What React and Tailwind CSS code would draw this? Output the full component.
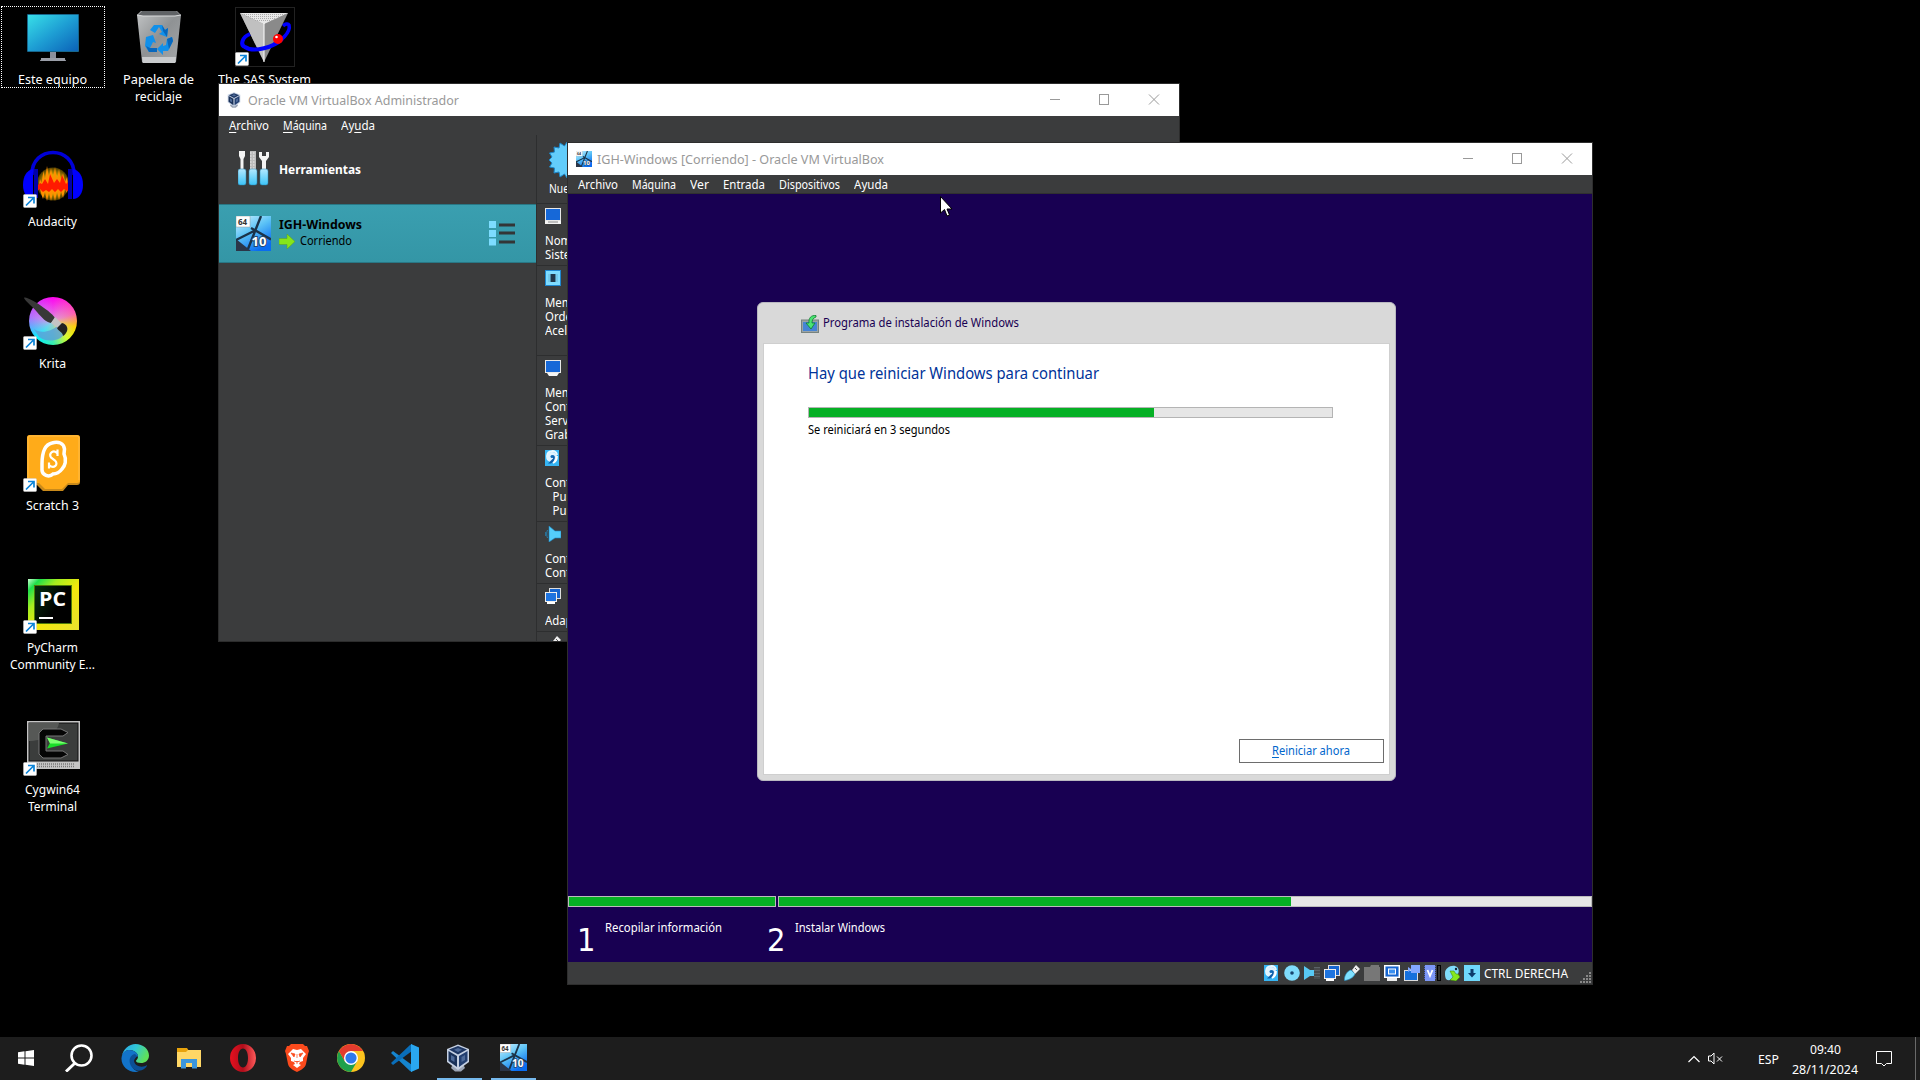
import React, { useLayoutEffect, useRef } from "react";

/* One line of text, condensed or widened to a given advance width. */
function T({ w, className = "", children }) {
  const ref = useRef(null);
  useLayoutEffect(() => {
    const el = ref.current;
    el.style.transform = "none";
    const natural = el.getBoundingClientRect().width;
    el.style.transform = `scaleX(${w / natural})`;
  }, [w]);
  return (
    <span className={`inline-block shrink-0 whitespace-nowrap ${className}`} style={{ width: w }}>
      <span ref={ref} className="inline-block origin-left whitespace-nowrap">{children}</span>
    </span>
  );
}

const U = ({ children }) => <span className="underline underline-offset-2">{children}</span>;

/* ---------- desktop icons (60x60 boxes) ---------- */
const MonitorArt = () => (
  <svg viewBox="0 0 60 60" className="size-[60px]">
    <defs><linearGradient id="mon" x1="0" y1="0" x2="1" y2="1"><stop offset="0" stopColor="#38dfe8" /><stop offset=".5" stopColor="#1e9fd4" /><stop offset="1" stopColor="#0b62b8" /></linearGradient></defs>
    <rect x="4" y="7" width="52" height="38" rx="1" fill="#17668c" />
    <rect x="5" y="8" width="50" height="36" fill="url(#mon)" />
    <path d="M27 45h6v6h-6z" fill="#8b8f9b" /><path d="M18 51h24v1.500l1 1v.500H17v-.500l1-1z" fill="#9a9ea8" />
  </svg>
);
const TrashArt = () => (
  <svg viewBox="0 0 60 60" className="size-[60px]">
    <defs><linearGradient id="bin" x1="0" y1="0" x2="1" y2="1"><stop offset="0" stopColor="#c3c5c6" /><stop offset=".5" stopColor="#8f9294" /><stop offset="1" stopColor="#a5a8aa" /></linearGradient></defs>
    <path d="M8 8l4-4h36l4 4-5 47H13z" fill="url(#bin)" />
    <path d="M9 8l4-4h34l4 4-5 1H14z" fill="#606366" /><path d="M8 8l6 1h32l6-1" fill="none" stroke="#d9dbdc" />
    <path d="M13 50h34l-.6 6H13.600z" fill="#c9cbcd" />
    <g fill="#1190ea">
      <path d="M25 18h8l3 5 3-2-1 9-8-3 3-2-3-5-4 6-5-3z" />
      <path d="M17 30l7-2 3 8-3-1-3 6h7v4h-8l-4-6z" /><path d="M38 32l5-2 1 4-5 10h-5v4l-6-6 6-6v3l3-1z" />
    </g>
    <path d="M33 18l3 5 3-2-1 9-4-6zM17 39l4 2h7v4h-8zM38 32l5-2 1 4-4 8z" fill="#0767bd" />
  </svg>
);
const SasArt = () => (
  <svg viewBox="0 0 60 60" className="size-[60px]">
    <rect x=".5" y=".5" width="59" height="59" fill="#000" stroke="#222" />
    <path d="M36 38C46 35 56 25 54 18c-1-2-4-1-6 1" fill="none" stroke="#00f" strokeWidth="3.500" />
    <path d="M5 6h48L29 55z" fill="#8a8a8a" /><path d="M5 6l24 11v38z" fill="#c0c0c0" />
    <path d="M5 6h48L29 17z" fill="#e8e8e8" /><path d="M7 7.500h44M11 9.500h36M15 11.500h28M20 13.500h18" stroke="#aaa" strokeDasharray="1 1" /><path d="M29 16v39" stroke="#fff" />
    <path d="M15 27C7 30 5 38 10 40c9 6 29 0 37-8" fill="none" stroke="#00f" strokeWidth="4" />
    <circle cx="43" cy="32" r="5" fill="#f00" /><circle cx="41.500" cy="30" r="1.300" fill="#fff" />
  </svg>
);
const AudacityArt = () => (
  <svg viewBox="0 0 60 60" className="size-[60px]">
    <defs><radialGradient id="aud"><stop offset="0" stopColor="#ff8a00" /><stop offset=".55" stopColor="#e0a800" /><stop offset="1" stopColor="#4a3a00" /></radialGradient></defs>
    <ellipse cx="30" cy="35" rx="16" ry="16.500" fill="url(#aud)" />
    <path d="M16 36l1-6 1.500 4 2-12 1.500 9 2-14 2 12 2-10 2 11 2-12 2 13 2-11 2 12 2-8 2 9 2-5 1 8-1 8-2-4-2 9-2-7-2 9-2-9-2 10-2-9-2 9-2-9-2 9-2-9-2 7-2-6z" fill="#ff9100" />
    <path d="M14 37l3-3 2 1 3-5 3 5 2-10 4 9 3-4 3 4 2-8 4 9 2-2 2 3v5l-3 1-3-2-3 3-3-3-3 3-3-3-3 3-3-2-3 2-3-3-3 2z" fill="#ff1a00" />
    <path d="M9 26C8-4 52-4 51 26" fill="none" stroke="#0000d8" strokeWidth="3.500" />
    <path d="M10 20c-6 1-10 7-10 16 0 8 4 14 10 14z" fill="#00f" /><path d="M50 20c6 1 10 7 10 16 0 8-4 14-10 14z" fill="#00f" />
    <path d="M11 20h4v29h-4zM45 20h4v30h-4z" fill="#0000a8" />
  </svg>
);
const KritaArt = () => (
  <span className="relative block size-[60px]">
    <span className="absolute left-[6px] top-[6px] size-[48px] rounded-full bg-[conic-gradient(from_0deg,#ff00f0,#ff5cb0_70deg,#ffd000_105deg,#d8ff20_140deg,#30f0b0_180deg,#00f0ff_225deg,#b070ff_280deg,#ff00f0)]" />
    <span className="absolute left-[6px] top-[6px] size-[48px] rounded-full bg-[radial-gradient(circle,rgba(210,190,220,.75),transparent_70%)]" />
    <svg viewBox="0 0 60 60" className="absolute inset-0 top-[2px] size-[60px]">
      <path d="M11 36c6 5 18 3 24-4l6 9c-3 7-17 9-25 3z" fill="#5b9fd8" opacity=".8" />
      <path d="M1 5c1-2 12 4 20 10 6 4 9 7 11 10l-4 5c-5-1-9-5-14-11C9 13 3 9 1 5z" fill="#383838" />
      <path d="M32 24l7 7-4 4-7-5z" fill="#c4c4c4" /><path d="M39 30c5 1 7 6 4 10-1 2-3 3-3 3 0-4-5-5-6-8z" fill="#222" />
    </svg>
  </span>
);
const ScratchArt = () => (
  <svg viewBox="0 0 60 60" className="size-[60px]">
    <path d="M4 5a3 3 0 013-3h47a3 3 0 013 3v44a3 3 0 01-3 3h-9l-5 6H20l-6-6H7a3 3 0 01-3-3z" fill="#c98a1b" />
    <path d="M4 5a3 3 0 013-3h47a3 3 0 013 3v42a3 3 0 01-3 3H45l-6 6H22l-6-6H7a3 3 0 01-3-3z" fill="#ffab19" />
    <path d="M5 47V5a2 2 0 012-2h47a2 2 0 012 2v42" fill="none" stroke="#ffbd4a" />
    <path d="M29 10c6-2 12 0 12.500 6l-.500 5c3 6 1 12-2 15-3 4-5 5-9 5-4 4-11 1-11-4v-6c0-7 1-19 10-21z" fill="none" stroke="#fff" strokeWidth="3.500" />
    <path d="M34.500 23v-6.500m0 4c-4-5-9 0-6.500 4l4 3c4 4-1 9-6 4.500m0 3.500v-6" fill="none" stroke="#fff" strokeWidth="2.200" />
  </svg>
);
const PycharmArt = () => (
  <span className="flex size-[60px] justify-center">
    <span className="mt-[4px] flex size-[51px] items-center justify-center bg-[linear-gradient(135deg,#c8ffd0,#1ee04a_12%,#a5ee20_30%,#f2e80c_55%,#e8e030)]">
      <span className="flex h-[39px] w-[38px] flex-col border border-[#4c7a08] bg-[linear-gradient(120deg,#06300e,#000_60%)] pl-[4px] pt-[3px]">
        <T w={27} className="h-[20px] font-['Open_Sans',sans-serif] text-[20px] font-bold leading-[20px] text-white">PC</T>
        <span className="mt-[8px] h-[2px] w-[14px] bg-white" />
      </span>
    </span>
  </span>
);
const CygwinArt = () => (
  <svg viewBox="0 0 60 60" className="size-[60px]">
    <rect x="4" y="4" width="53" height="48" fill="#c4c4c4" /><rect x="6" y="6" width="49" height="38" fill="#3b3d3c" stroke="#111" />
    <path d="M6 6h30C34 18 18 24 6 24z" fill="#565856" />
    <path d="M14 47h38M14 49.500h38" stroke="#777" strokeWidth="1.500" strokeDasharray="1 1" />
    <path d="M20 12h18l7 3.500-5 3.500H23v15h17l5 3.500-7 3.500H20l-4-4V16z" fill="#050505" stroke="#777" />
    <path d="M24 20.500l21 6-21 5 3-5.500z" fill="#18dc28" /><path d="M24 20.500l21 6H27z" fill="#7cff70" />
  </svg>
);

const COLUMN_1 = [
  { art: <MonitorArt />, lines: [["Este equipo", 69]], selected: true },
  { art: <AudacityArt />, lines: [["Audacity", 49]], link: true },
  { art: <KritaArt />, lines: [["Krita", 27]], link: true },
  { art: <ScratchArt />, lines: [["Scratch 3", 53]], link: true },
  { art: <PycharmArt />, lines: [["PyCharm", 51], ["Community E...", 85]], link: true },
  { art: <CygwinArt />, lines: [["Cygwin64", 55], ["Terminal", 49]], link: true },
];
const TRASH = { art: <TrashArt />, lines: [["Papelera de", 71], ["reciclaje", 47]] };
const SAS = { art: <SasArt />, lines: [["The SAS System", 93]], link: true };

function DesktopIcon({ item }) {
  return (
    <div className={`mx-px mt-[6px] flex h-[82px] w-[104px] flex-col items-center ${item.selected ? "outline-dotted outline-1 -outline-offset-1 outline-white" : ""}`}>
      <div className="relative mt-px size-[60px] shrink-0">
        {item.art}
        {item.link && (
          <svg viewBox="0 0 14 14" className="absolute bottom-[1px] left-0 size-[14px]">
            <rect x=".5" y=".5" width="13" height="13" rx="1" fill="#fff" stroke="#ccc" strokeWidth=".5" />
            <path d="M3 11.500L10.500 4M5 3.500h6v6" fill="none" stroke="#0c84d8" strokeWidth="1.700" />
          </svg>
        )}
      </div>
      <div className="mt-[4px] flex flex-col items-center pr-[1px] text-[12px] leading-[17px] text-white">
        {item.lines.map(([t, w]) => <T key={t} w={w}>{t}</T>)}
      </div>
    </div>
  );
}

/* ---------- VirtualBox art ---------- */
const VBoxLogo = ({ className }) => (
  <svg viewBox="0 0 24 28" className={className}>
    <path d="M7 20h10l2 4-4 3.500H9L5 24z" fill="#9ba4b4" />
    <path d="M12 .5l11 4.500v13L12 26 1 18V5z" fill="#c5d0e2" />
    <path d="M12 2l9 3.500-9 5-9-5z" fill="#1e3764" /><path d="M2.500 7L11 12v11l-8.500-6z" fill="#1a3158" /><path d="M21.500 7L13 12v11l8.500-6z" fill="#233f70" />
    <path d="M12 4l4 1.800-4 2.200-4-2.200zM5 11l3.500 2v5L5 16zM19 11l-3.500 2v5l3.500-2z" fill="#4e6a98" />
  </svg>
);
const Win10Logo = ({ className }) => (
  <svg viewBox="0 0 35 35" className={className}>
    <defs><linearGradient id="w10" x1="0" y1="0" x2=".6" y2="1"><stop offset="0" stopColor="#d5f3ff" /><stop offset=".5" stopColor="#5cc3f6" /><stop offset="1" stopColor="#0a6cf0" /></linearGradient></defs>
    <rect width="35" height="35" fill="url(#w10)" />
    <path d="M0 23l15 12H0z" fill="#2b3547" />
    <path d="M25 0L12 33M0 24L19 14.500M15 12l20 11.500" stroke="#1b3349" strokeWidth="2.400" />
    <rect width="14" height="11" fill="#fff" stroke="#999" strokeWidth=".5" />
    <text x="2" y="8.700" fontSize="8" fontWeight="bold" fontFamily="Noto Sans, sans-serif" fill="#333">64</text>
    <text x="15.500" y="30" fontSize="13" fontWeight="bold" fontFamily="Noto Sans, sans-serif" fill="#fff" stroke="#24476b" strokeWidth="2" paintOrder="stroke">10</text>
  </svg>
);
const ToolsArt = () => (
  <svg viewBox="0 0 31 35" className="h-[35px] w-[31px]">
    <defs><linearGradient id="hnd" x1="0" y1="0" x2="0" y2="1"><stop offset="0" stopColor="#b4e8ff" /><stop offset="1" stopColor="#3cc4f8" /></linearGradient></defs>
    <path d="M1 0h6v5l-1.500 3v12h-3V8L1 5z" fill="#f4f4f4" /><path d="M12 0h6v20h-6z" fill="#bbb" /><path d="M12 2h6M12 5h6M12 8h6M12 11h6M12 14h6M12 17h6" stroke="#eee" strokeDasharray="1.500 1.500" />
    <path d="M21 1v5l3 4v10h4V10l3-4V1l-3 0v4h-4V1z" fill="#f4f4f4" />
    <g fill="url(#hnd)" stroke="#2a84b0" strokeWidth=".5"><rect x="0" y="18" width="8" height="16" rx="2" /><rect x="11" y="18" width="8" height="16" rx="2" /><rect x="22" y="18" width="8" height="16" rx="2" /></g>
  </svg>
);

const ICONS = {
  pc: <><rect x=".5" y=".5" width="15" height="12" fill="#1668d8" stroke="#e8e8e8" /><path d="M0 13h16v3H0z" fill="#f4f4f4" /><path d="M3 14h10" stroke="#888" /></>,
  chip: <><rect x=".5" y=".5" width="15" height="15" fill="#7edcff" stroke="#1f87d0" /><path d="M5.500 4h5v8h-5z" fill="#20364a" /><path d="M4 4.500v7M12 4.500v7" stroke="#5590b0" strokeDasharray="1 1" /></>,
  screen: <><rect x=".5" y=".5" width="15" height="12" fill="#1668d8" stroke="#e8e8e8" /><path d="M2 13h12l-2 3H4z" fill="#f4f4f4" /></>,
  disk: <><rect x="0" y="0" width="14" height="16" fill="#36b5f4" /><path d="M12 5a5 5 0 10-6 6" fill="none" stroke="#eaf8ff" strokeWidth="2" /><circle cx="7" cy="7" r="5" fill="#dff3ff" /><path d="M7 5.500c4-2 4 5-1 8H3l4-4c2-1 1-2 0-4z" fill="#0d5ca8" /><circle cx="7" cy="6.500" r="1.500" fill="#0d6ab8" /><path d="M12 6c0 4-2 6-4 7" stroke="#fff" strokeWidth="1.800" fill="none" /></>,
  sound: <><path d="M4 0l6 5h6v7h-6l-6 4z" fill="#54cdfa" stroke="#1d88c8" strokeWidth=".6" /><path d="M2.500 4c-1 2-1 6 0 8M.7 6v4" stroke="#267cab" fill="none" /></>,
  net: <><rect x="4.500" y=".5" width="11" height="10" fill="#1565cf" stroke="#ddd" /><rect x=".5" y="4.500" width="11" height="9" fill="#1e74df" stroke="#eee" /><path d="M2 14h8v2H2z" fill="#fff" /></>,
  usb: <><path d="M.5 15.500C0 11 3 6 7 5l4 4c-2 4-6 6-10.500 6.500z" fill="#7ee0ff" stroke="#2790c8" strokeWidth=".6" /><path d="M8 5l4-5 4 4-5 5z" fill="#eee" /><path d="M11 3l2 2" stroke="#555" /></>,
  cd: <><circle cx="8" cy="8" r="7.800" fill="#7fdcfc" /><circle cx="8" cy="8" r="1.800" fill="#17456e" /></>,
  audio: <><path d="M0 1l6 4h4v6H6l-6 4z" fill="#58c9f5" /><path d="M10 2h6v12h-6z" fill="#5c6368" /><path d="M10 4h6M10 7h6M10 10h6M10 13h6" stroke="#333" /></>,
  folder: <path d="M0 2h6l1-2h8v2h1v14H0z" fill="#777" />,
  display: <><rect x=".5" y=".5" width="15" height="12" fill="#eee" stroke="#fff" /><rect x="1.500" y="1.500" width="13" height="10" fill="#1565d0" /><rect x="4.500" y="4" width="7" height="5" fill="#3b90f0" stroke="#fff" /><path d="M3 13h10v3H3z" fill="#eee" /></>,
  record: <><rect x=".5" y="5.500" width="13" height="10" fill="#1670dc" stroke="#ddd" /><path d="M4 2l3 2V0h9v8H7V5L4 7z" fill="#82a8ff" /></>,
  cpu: <><path d="M3 0h10v16H3z" fill="#7c96f6" /><path d="M2.500 1v14M13.500 1v14" stroke="#4c66c4" strokeDasharray="1 1" /><path d="M5.500 5L8 11l2.500-6" stroke="#fff" strokeWidth="1.800" fill="none" /></>,
  mouse: <><path d="M1 8c0-4 5-8 10-7 4 1 5 6 2 9-3 4-8 7-11 4-1-2-1-4-1-6z" fill="#80dcfa" /><circle cx="12" cy="4" r="1.200" fill="#123" /><path d="M6 6h4l2 3 2 0 2 3-4 4-6-1 3-3z" fill="#86e81e" stroke="#318008" strokeWidth=".5" /></>,
  down: <><rect width="16" height="16" fill="#6fd8fb" /><path d="M6.500 4h3v4H12l-4 4.500L4 8h2.500z" fill="#0c3b6a" /></>,
};
const Glyph = ({ n }) => <svg viewBox="0 0 16 16" className="block size-4 shrink-0">{ICONS[n]}</svg>;

function TitleBar({ icon, title, w }) {
  return (
    <div className="flex h-8 shrink-0 items-center bg-white pl-2 text-[13px] text-[#999]">
      {icon}
      <T w={w} className="ml-[5px] leading-[30px]">{title}</T>
      <svg viewBox="0 0 110 12" className="ml-auto mr-[19px] h-3 w-[110px]" fill="none" stroke="#999" shapeRendering="crispEdges">
        <path d="M0 5.500h10" /><rect x="49.500" y=".5" width="9" height="10" /><path d="M99 .5l10 10M109 .5l-10 10" shapeRendering="auto" />
      </svg>
    </div>
  );
}

/* The right column shows only as far as the guest window's left edge. */
const SECTIONS = [
  ["pc", ["Nom", "Siste"], "h-[62px]"],
  ["chip", ["Mem", "Orde", "Acel"], "h-[90px]"],
  ["screen", ["Mem", "Cont", "Serv", "Grab"], "h-[90px]"],
  ["disk", ["Cont", "  Pu", "  Pu"], "h-[76px]"],
  ["sound", ["Cont", "Cont"], "h-[62px]"],
  ["net", ["Adap"], "h-[48px]"],
  ["usb", [], "h-[10px] overflow-hidden"],
];

function ManagerWindow() {
  return (
    <div className="absolute left-[218px] top-[83px] flex h-[559px] w-[962px] flex-col overflow-hidden border border-[#2c2c2c] bg-[#3b3c3d] text-[12px] text-white">
      <TitleBar icon={<VBoxLogo className="mr-[2px] h-4 w-[14px]" />} title="Oracle VM VirtualBox Administrador" w={211} />
      <div className="flex h-[19px] shrink-0 gap-[14px] pl-[10px] leading-[19px]">
        <T w={40}><U>A</U>rchivo</T><T w={44}><U>M</U>áquina</T><T w={34}>Ay<U>u</U>da</T>
      </div>
      <div className="flex min-h-0 flex-1">
        <div className="flex w-[317px] shrink-0 flex-col">
          <div className="flex h-[69px] pl-[19px] pt-4">
            <ToolsArt />
            <T w={82} className="ml-[10px] mt-[11px] h-4 font-bold leading-4">Herramientas</T>
          </div>
          <div className="flex h-[59px] border-y border-y-[#297785] bg-linear-to-b from-[#3a9fb0] to-[#3496a6] pl-[17px] text-black">
            <Win10Logo className="mt-[11px] size-[35px]" />
            <div className="ml-2 mt-[12px] flex flex-col">
              <T w={83} className="h-4 font-bold leading-4">IGH-Windows</T>
              <div className="flex items-center gap-[5px]">
                <svg viewBox="0 0 16 15" className="h-[15px] w-4 shrink-0"><path d="M0 4.500h8V0l8 7.500L8 15v-4.500H0z" fill="#86e51a" stroke="#5a9c20" strokeWidth=".5" /></svg>
                <T w={52} className="h-4 leading-4">Corriendo</T>
              </div>
            </div>
            <svg viewBox="0 0 26 25" className="ml-auto mr-[21px] mt-[16px] h-[25px] w-[26px]">
              <g fill="#7ddcff"><path d="M0 0h7v7H0zM0 9h7v7H0zM0 17.500h7v7H0z" /></g>
              <path d="M10 4h16M10 12h16M10 21h16" stroke="#333536" strokeWidth="3" />
            </svg>
          </div>
        </div>
        <div className="flex min-w-0 flex-1 flex-col border-l border-[#2d2e2f]">
          <div className="flex h-[68px] shrink-0 flex-col pl-[12px] pt-[7px]">
            <svg viewBox="0 0 36 36" className="size-9">
              <path d="M18 0l2.500 4L25 1l1 5 5-1-.500 5 5 1-2.500 4 3 3-3 3 2.500 4-5 1 .500 5-5-1-1 5-4.500-3-2.500 4-2.500-4-4.500 3-1-5-5 1 .500-5-5-1L3 21l-3-3 3-3-2.500-4 5-1L5 5l5 1 1-5 4.500 3z" fill="#63cdfb" stroke="#1d86c8" />
            </svg>
            <T w={20} className="mt-[4px] leading-[14px]">Nue</T>
          </div>
          {SECTIONS.map(([n, lines, h], i) => (
            <div key={i} className={`shrink-0 border-t border-[#2d2e2f] pl-2 pt-1 ${h}`}>
              <Glyph n={n} />
              <div className="mt-[10px] origin-left scale-x-[.95]">
                {lines.map((l, j) => <div key={j} className="whitespace-pre leading-[14px]">{l.startsWith(" ") ? <span className="pl-2">{l.trim()}</span> : l}</div>)}
              </div>
            </div>
          ))}
        </div>
      </div>
    </div>
  );
}

/* Windows setup running inside the guest */
function SetupDialog() {
  return (
    <div className="ml-[189px] flex h-[479px] w-[639px] flex-col rounded-[6px] border border-[#b9b8c0] bg-[#d9d9d9] px-[5px] pb-[5px]">
      <div className="flex h-[40px] shrink-0 pl-[38px] pt-[12px] text-[12px] text-[#180052]">
        <svg viewBox="0 0 18 18" className="size-[18px]">
          <rect x=".5" y="5" width="17" height="12.500" fill="#9aa3a6" stroke="#77837f" /><rect x="2" y="7" width="14" height="9" fill="#4584d5" />
          <path d="M15 .5C10 0 7.500 3 8 8H5l5 6 4-6h-3c0-3 1-5 4-6z" fill="#4be373" stroke="#0c7e2d" strokeWidth=".8" />
        </svg>
        <T w={196} className="ml-[4px] h-4 leading-4">Programa de instalación de Windows</T>
      </div>
      <div className="flex min-h-0 flex-1 flex-col border border-[#cfcfcf] bg-white pl-[44px]">
        <T w={291} className="mt-[17px] h-[24px] text-[15.5px] leading-[24px] text-[#003399]">Hay que reiniciar Windows para continuar</T>
        <div className="mt-[22px] h-[11px] w-[525px] shrink-0 border border-[#b4b4b4] bg-[#e6e6e6]"><div className="h-full w-[345px] bg-[#06b025]" /></div>
        <T w={142} className="mt-[4px] h-4 text-[12px] leading-4 text-black">Se reiniciará en 3 segundos</T>
        <button className="mb-[11px] ml-auto mr-[5px] mt-auto flex h-6 w-[145px] items-center justify-center border border-[#6d6d6d] pr-[2px] text-[12px] leading-4 text-[#0066cc]"><T w={78}><U>R</U>einiciar ahora</T></button>
      </div>
    </div>
  );
}

const MENUS = [["Archivo", 40], ["Máquina", 44], ["Ver", 19], ["Entrada", 42], ["Dispositivos", 61], ["Ayuda", 34]];

function Step({ n, label, w, className = "" }) {
  return (
    <div className={`flex ${className}`}>
      <T w={18.5} className="mt-[14px] h-[38px] font-['DejaVu_Sans',sans-serif] text-[32px] font-normal leading-[38px]">{n}</T>
      <T w={w} className="ml-[9px] mt-[13px] h-4 leading-4">{label}</T>
    </div>
  );
}

function GuestWindow() {
  return (
    <div className="absolute left-[567px] top-[142px] flex h-[843px] w-[1026px] flex-col overflow-hidden border border-[#2e2e2e] bg-[#3b3c3d] text-[12px] text-white">
      <TitleBar icon={<Win10Logo className="size-4" />} title="IGH-Windows [Corriendo] - Oracle VM VirtualBox" w={287} />
      <div className="flex h-[19px] shrink-0 gap-[14px] border-b border-[#303030] pl-[10px] leading-[19px]">
        {MENUS.map(([t, w]) => <T key={t} w={w}>{t}</T>)}
      </div>
      <div className="flex h-[768px] shrink-0 flex-col bg-[#180052] pt-[108px]">
        <SetupDialog />
        <div className="mt-[115px] flex h-[11px] shrink-0 gap-[2px]">
          <div className="w-[208px] border border-[#bcbcbc] bg-[#06b025]" />
          <div className="flex-1 border border-[#bcbcbc] bg-[#e6e6e6]"><div className="h-full w-[512px] bg-[#06b025]" /></div>
        </div>
        <div className="flex h-[55px] pl-[9px]">
          <Step n="1" label="Recopilar información" w={117} className="w-[190px]" />
          <Step n="2" label="Instalar Windows" w={90} />
        </div>
      </div>
      <div className="flex h-[22px] shrink-0 items-center justify-end">
        <div className="flex gap-[4px]">
          {["disk", "cd", "audio", "net", "usb", "folder", "display", "record"].map((n) => <Glyph key={n} n={n} />)}
        </div>
        <div className="ml-[2px]"><Glyph n="cpu" /></div>
        <div className="ml-[-1px] mr-[3px] h-4 w-1 border border-black bg-[#333]" />
        <div className="flex gap-[4px]"><Glyph n="mouse" /><Glyph n="down" /></div>
        <T w={84} className="ml-[4px] mt-[2px] leading-5">CTRL DERECHA</T>
        <svg viewBox="0 0 12 12" className="ml-[12px] mt-[9px] size-3" fill="#888"><path d="M9 0h2v2H9zM9 3h2v2H9zM9 6h2v2H9zM9 9h2v2H9zM6 3h2v2H6zM6 6h2v2H6zM6 9h2v2H6zM3 6h2v2H3zM3 9h2v2H3zM0 9h2v2H0z" /></svg>
      </div>
    </div>
  );
}

/* ---------- taskbar ---------- */
const TASKS = [
  ["w-[52px]", <svg viewBox="0 0 16 16" className="size-4"><path d="M0 2.300l6.500-1v6.200H0zM7.500 1.200L16 0v7.500H7.500zM0 8.500h6.500v6.200l-6.500-1zM7.500 8.500H16V16l-8.500-1.200z" fill="#fff" /></svg>],
  ["w-[54px]", <svg viewBox="0 0 28 28" className="size-7" fill="none" stroke="#fff"><circle cx="16.500" cy="11.500" r="10" strokeWidth="2.600" /><path d="M10 19l-9 8.500" strokeWidth="3" /></svg>],
  ["w-[58px]", <svg viewBox="0 0 28 28" className="size-7">
    <defs><linearGradient id="e1" x1="0" y1="0" x2="1" y2=".4"><stop offset="0" stopColor="#2aa5e8" /><stop offset=".5" stopColor="#30c6d8" /><stop offset="1" stopColor="#5ee05a" /></linearGradient></defs>
    <path d="M1 12C2 5 8 0 14.500 0 22 0 28 5 28 11.500c0 5-4 7.500-8 7.500-3 0-5-1-5-2 0-1 2-1.500 2-4.500C17 9 13 6 8.500 6 4.500 6 2 9 1 12z" fill="url(#e1)" />
    <path d="M.5 14C1 8 5 6 8.500 6 13 6 17 9 17 12.500h-3c-3 0-5 3-4 7 1 5 5 8 8 8-9 2-18-4-17.500-13.500z" fill="#1273c9" />
    <path d="M14 10c-5 1-7 6-4 12 3 5 9 6 13 3 2-1 3-3 3-4-4 3-12 2-13-4 0-2 2-3 3-5z" fill="#0c4f96" />
  </svg>],
  ["w-[50px]", <svg viewBox="0 0 24 21" className="h-[21px] w-6"><path d="M0 0h10l2 3h12v4H0z" fill="#e8a30c" /><path d="M0 4h9l2-2h13v17H0z" fill="#ffd766" /><path d="M4 11h16v9.500h-5V15h-6v5.500H4z" fill="#3a96dd" /></svg>],
  ["w-[58px]", <svg viewBox="0 0 26 28" className="h-7 w-[26px]"><defs><linearGradient id="op" x1="0" y1="0" x2="1" y2="0"><stop offset="0" stopColor="#e8101f" /><stop offset=".5" stopColor="#b00d1b" /><stop offset="1" stopColor="#ff5a5a" /></linearGradient></defs><path fillRule="evenodd" d="M13 0a13 14 0 100 28 13 14 0 000-28zm0 4.500c3 0 5 4 5 9.500s-2 9.500-5 9.500-5-4-5-9.500 2-9.500 5-9.500z" fill="url(#op)" /></svg>],
  ["w-[50px]", <svg viewBox="0 0 24 28" className="h-7 w-6"><path d="M6 0h12l2 2 2 0 2 5-1 3-2 10c-1 4-5 6-9 8-4-2-8-4-9-8L1 10 0 7l2-5h2z" fill="#fb4a1c" /><path d="M8 5l4 1 4-1 5 5-3 4v3l-3 1-1 2 2 1-4 3-4-3 2-1-1-2-3-1v-3l-3-4z" fill="#fff" /><path d="M6 9l4 1-1 3zM18 9l-4 1 1 3zM12 10v4M9 17l3 1 3-1M12 18v2" fill="#fb4a1c" stroke="#fb4a1c" strokeWidth=".7" /></svg>],
  ["w-[58px]", <svg viewBox="0 0 28 28" className="size-7"><circle cx="14" cy="14" r="14" fill="#fcc31e" /><path d="M1.900 7A14 14 0 0014 28l6-10.500L8 17.500z" fill="#1fa04b" /><path d="M1.900 7A14 14 0 0126.100 7H14L8 17.500z" fill="#e33b2e" /><circle cx="14" cy="14" r="7" fill="#fff" /><circle cx="14" cy="14" r="5.600" fill="#2f79ec" /></svg>],
  ["w-[50px]", <svg viewBox="0 0 28 28" className="size-7"><path d="M0 9l2-2 19 14v7l-2-1z" fill="#1585cf" /><path d="M0 19l2 2L21 7V0l-2 1z" fill="#0a6eb9" /><path d="M20 0l8 3.500v21L20 28z" fill="#2aa7f0" /></svg>],
];

function Taskbar() {
  return (
    <div className="absolute inset-x-0 bottom-0 flex h-[43px] bg-[#1d1d1d] text-[12px] text-white">
      {TASKS.map(([w, art], i) => <div key={i} className={`flex items-center justify-center pb-px ${w}`}>{art}</div>)}
      <div className="ml-[7px] flex w-[45px] items-center justify-center border-b-2 border-[#76b9ed] pr-[4px]"><VBoxLogo className="h-7 w-6" /></div>
      <div className="ml-[9px] flex w-[45px] items-center justify-center border-b-2 border-[#76b9ed]"><Win10Logo className="size-[27px]" /></div>
      <div className="ml-auto flex items-center">
        <svg viewBox="0 0 12 8" className="h-2 w-3" fill="none" stroke="#fff" strokeWidth="1.200"><path d="M.5 7L6 1.500 11.500 7" /></svg>
        <svg viewBox="0 0 15 13" className="ml-2 h-[13px] w-[15px]" fill="none" stroke="#fff"><path d="M.5 4v5H3l3 3V1L3 4z" /><path d="M9 4.500l5 5M14 4.500l-5 5" /></svg>
        <T w={21} className="ml-[35px] mt-[2px]">ESP</T>
        <div className="ml-[12px] mt-[2px] flex w-[68px] flex-col items-center leading-[20px]"><T w={31}>09:40</T><T w={66}>28/11/2024</T></div>
        <svg viewBox="0 0 16 16" className="ml-[17px] size-4" fill="none" stroke="#fff"><path d="M.5.500h15v12h-5L8 15l-2.500-2.500h-5z" /></svg>
        <div className="ml-[23px] mr-1 h-[43px] w-px bg-[#6a6a6a]" />
      </div>
    </div>
  );
}

export default function App() {
  return (
    <div className="relative h-[1080px] w-[1920px] overflow-hidden bg-black font-['Noto_Sans','Open_Sans',sans-serif]">
      <div className="grid w-max grid-flow-col grid-cols-[repeat(3,106px)] grid-rows-[repeat(6,142px)]">
        {COLUMN_1.map((d, i) => <DesktopIcon key={i} item={d} />)}
        <DesktopIcon item={TRASH} />
        <div className="row-span-5" />
        <DesktopIcon item={SAS} />
      </div>
      <ManagerWindow />
      <GuestWindow />
      <svg viewBox="0 0 13 21" className="absolute left-[940px] top-[196px] h-[21px] w-[13px]"><path d="M.5.500v16.500l4-3.500 2.500 6.500 2.500-1-2.500-6h5z" fill="#fff" stroke="#000" /></svg>
      <Taskbar />
    </div>
  );
}
